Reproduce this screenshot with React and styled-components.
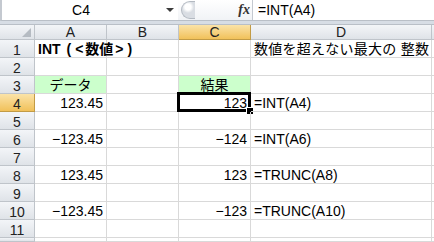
import styled, { createGlobalStyle, css } from 'styled-components'

const GlobalStyle = createGlobalStyle`
  html, body {
    margin: 0;
    padding: 0;
    background: #ffffff;
    overflow: hidden;
  }
  * {
    box-sizing: border-box;
  }
`

const FONT = `"Liberation Sans", "Noto Sans CJK JP", sans-serif`

const Ventana = styled.div`
  width: 434px;
  height: 242px;
  overflow: hidden;
  background: #ffffff;
  font-family: ${FONT};
  color: #000;
`

const BarraFormula = styled.div`
  display: flex;
  align-items: stretch;
  height: 21px;
  background: #ffffff;
  border-left: 2px solid #c4c9d0;
  border-bottom: 1px solid #b9bfc7;
`

const CuadroNombre = styled.div`
  position: relative;
  width: 176px;
  display: flex;
  align-items: center;
  justify-content: center;
  font-size: 14px;
  padding-right: 18px;
`

const Flechita = styled.span`
  position: absolute;
  right: 4px;
  top: 8px;
  width: 0;
  height: 0;
  border-left: 4px solid transparent;
  border-right: 4px solid transparent;
  border-top: 4px solid #3c3c3c;
`

const ZonaBotones = styled.div`
  width: 74px;
  display: flex;
  align-items: center;
  justify-content: space-between;
  padding: 0 2px 0 3px;
  background: linear-gradient(#ffffff, #f1f3f6);
`

const Pomo = styled.div`
  width: 14px;
  height: 18px;
  border-radius: 9px 0 0 9px;
  border: 1px solid #b3b9c1;
  border-right: none;
  background: radial-gradient(circle at 6px 5px, #ffffff 0 3px, #d9dde3 6px);
`

const Fx = styled.span`
  font-family: "Liberation Serif", serif;
  font-style: italic;
  font-weight: bold;
  font-size: 14px;
  color: #333;
`

const EntradaFormula = styled.div`
  flex: 1;
  display: flex;
  align-items: center;
  padding-left: 5px;
  font-size: 14px;
  border-left: 1px solid #c4c9d0;
`

const Separacion = styled.div`
  height: 4px;
  background: #d7dde5;
  border-bottom: 1px solid #b9bfc7;
`

const Cuadricula = styled.div`
  display: grid;
  grid-template-columns: 35px 72px 72px 72px 181px 1fr;
  grid-template-rows: 15px repeat(11, 18px) 1fr;
`

const Encabezado = styled.div`
  display: flex;
  align-items: center;
  justify-content: center;
  font-size: 14px;
  color: #222;
  background: linear-gradient(#f3f5f8, #dfe3e8);
  border-right: 1px solid #bfc4ca;
  border-bottom: 1px solid #bfc4ca;
  ${p => p.$activo && css`
    background: linear-gradient(#fbe3a8, #f1c15a);
    border-color: #c29b45;
  `}
`

const Esquina = styled(Encabezado)`
  position: relative;
  &::after {
    content: '';
    position: absolute;
    right: 3px;
    bottom: 2px;
    width: 0;
    height: 0;
    border-left: 9px solid transparent;
    border-bottom: 9px solid #b5bbc2;
  }
`

const NumeroFila = styled(Encabezado)`
  padding-top: 3px;
  ${p => p.$activo && css`
    background: linear-gradient(#fbe3a8, #f1c15a);
  `}
`

const Celda = styled.div`
  position: relative;
  display: flex;
  align-items: flex-end;
  padding: 0 3px 0 3px;
  font-size: 14px;
  line-height: 15px;
  white-space: nowrap;
  border-right: 1px solid #d9d9d9;
  border-bottom: 1px solid #d9d9d9;
  justify-content: ${p => (p.$alinear === 'derecha' ? 'flex-end' : p.$alinear === 'centro' ? 'center' : 'flex-start')};
  background: ${p => (p.$verde ? '#ccffcc' : 'transparent')};
  font-weight: ${p => (p.$negrita ? 'bold' : 'normal')};
  letter-spacing: ${p => (p.$espaciado ? '0.25px' : 'normal')};
  z-index: ${p => (p.$desborde ? 2 : 1)};
  overflow: visible;
  ${p => p.$seleccion && css`
    &::before {
      content: '';
      position: absolute;
      left: -2px;
      top: -2px;
      right: -1px;
      bottom: -1px;
      border: 3px solid #000;
      pointer-events: none;
    }
    &::after {
      content: '';
      position: absolute;
      right: -4px;
      bottom: -4px;
      width: 6px;
      height: 6px;
      background: #000;
      border: 1px solid #fff;
    }
  `}
`

// signos de puntuación algo más separados, como en la hoja original
const Signo = styled.span`
  margin: 0 2px;
`

const titulo = (
  <>
    INT&nbsp;<Signo>(</Signo><Signo>&lt;</Signo>数値<Signo>&gt;</Signo><Signo>)</Signo>
  </>
)

const columnas = ['A', 'B', 'C', 'D', '']

const filas = [
  { n: 1, celdas: [{ t: titulo, negrita: true, desborde: true }, {}, {}, { t: '数値を超えない最大の 整数', espaciado: true }, {}] },
  { n: 2, celdas: [{}, {}, {}, {}, {}] },
  { n: 3, celdas: [{ t: 'データ', alinear: 'centro', verde: true }, {}, { t: '結果', alinear: 'centro', verde: true }, {}, {}] },
  { n: 4, celdas: [{ t: '123.45', alinear: 'derecha' }, {}, { t: '123', alinear: 'derecha', seleccion: true }, { t: '=INT(A4)' }, {}] },
  { n: 5, celdas: [{}, {}, {}, {}, {}] },
  { n: 6, celdas: [{ t: '−123.45', alinear: 'derecha' }, {}, { t: '−124', alinear: 'derecha' }, { t: '=INT(A6)' }, {}] },
  { n: 7, celdas: [{}, {}, {}, {}, {}] },
  { n: 8, celdas: [{ t: '123.45', alinear: 'derecha' }, {}, { t: '123', alinear: 'derecha' }, { t: '=TRUNC(A8)' }, {}] },
  { n: 9, celdas: [{}, {}, {}, {}, {}] },
  { n: 10, celdas: [{ t: '−123.45', alinear: 'derecha' }, {}, { t: '−123', alinear: 'derecha' }, { t: '=TRUNC(A10)' }, {}] },
  { n: 11, celdas: [{}, {}, {}, {}, {}] },
  { n: 12, celdas: [{}, {}, {}, {}, {}] },
]

const App = () => {
  return (
    <Ventana>
      <GlobalStyle />
      <BarraFormula>
        <CuadroNombre>
          C4
          <Flechita />
        </CuadroNombre>
        <ZonaBotones>
          <Pomo />
          <Fx>fx</Fx>
        </ZonaBotones>
        <EntradaFormula>=INT(A4)</EntradaFormula>
      </BarraFormula>
      <Separacion />

      <Cuadricula>
        <Esquina />
        {columnas.map(c => (
          <Encabezado key={c || 'extra'} $activo={c === 'C'}>{c}</Encabezado>
        ))}

        {filas.map(fila => (
          <Fila key={fila.n} fila={fila} />
        ))}
      </Cuadricula>
    </Ventana>
  )
}

const Fila = ({ fila }) => (
  <>
    <NumeroFila $activo={fila.n === 4}>{fila.n <= 11 ? fila.n : ''}</NumeroFila>
    {fila.celdas.map((c, i) => (
      <Celda
        key={i}
        $alinear={c.alinear}
        $verde={c.verde}
        $negrita={c.negrita}
        $espaciado={c.espaciado}
        $desborde={c.desborde}
        $seleccion={c.seleccion}
      >
        {c.t}
      </Celda>
    ))}
  </>
)

export default App
